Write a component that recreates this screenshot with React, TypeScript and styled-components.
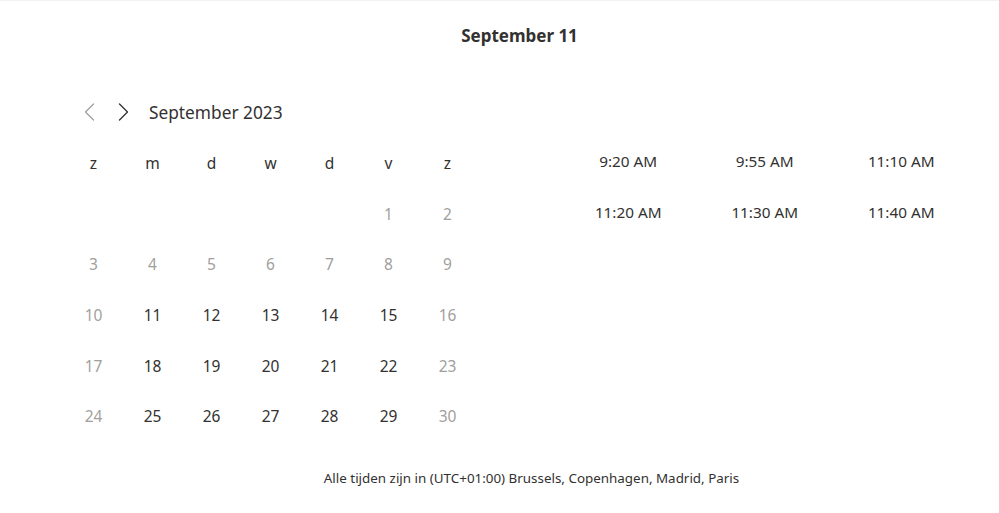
import React from 'react';
import styled, { createGlobalStyle } from 'styled-components';

const GlobalStyle = createGlobalStyle`
  html, body {
    margin: 0;
    padding: 0;
    background: #fff;
  }
  body {
    font-family: 'Noto Sans', 'Open Sans', sans-serif;
    color: #323130;
  }
`;

const Page = styled.div`
  width: 999px;
  height: 513px;
  box-sizing: border-box;
  border-top: 1px solid #f3f2f1;
  padding: 0 24px 0 64px;
  display: flex;
  flex-direction: column;
`;

const Title = styled.h2`
  margin: 0;
  height: 72px;
  line-height: 70px;
  text-align: center;
  font-size: 17px;
  font-weight: 700;
  color: #323130;
`;

const Body = styled.div`
  display: flex;
  align-items: flex-start;
  margin-top: 18px;
`;

const Calendar = styled.div`
  width: 414px;
  display: flex;
  flex-direction: column;
`;

const NavRow = styled.div`
  height: 47px;
  display: flex;
  align-items: center;
  padding-left: 16px;
  box-sizing: border-box;
  padding-bottom: 5px;
`;

const NavButton = styled.button<{ $muted?: boolean }>`
  border: 0;
  background: none;
  padding: 0;
  width: 34px;
  height: 28px;
  display: flex;
  align-items: center;
  justify-content: flex-start;
  padding-left: 4px;
  color: ${(p) => (p.$muted ? '#a19f9d' : '#323130')};
  cursor: pointer;
`;

const MonthLabel = styled.span`
  font-size: 17.3px;
  color: #323130;
  margin-left: 1px;
`;

const DayGrid = styled.div`
  display: grid;
  grid-template-columns: repeat(7, 59px);
  grid-auto-rows: 50.6px;
`;

const Cell = styled.div<{ $muted?: boolean }>`
  display: flex;
  align-items: center;
  justify-content: center;
  font-size: 15.5px;
  color: ${(p) => (p.$muted ? '#a19f9d' : '#323130')};
`;

const Times = styled.div`
  margin-left: 82px;
  padding-top: 44px;
  display: grid;
  grid-template-columns: repeat(3, 136.5px);
  grid-auto-rows: 51px;
`;

const Slot = styled.button`
  border: 0;
  background: none;
  font-family: inherit;
  font-size: 15.3px;
  color: #323130;
  display: flex;
  align-items: center;
  justify-content: center;
  cursor: pointer;
  padding: 0;
`;

const Footer = styled.div`
  margin-top: 26px;
  text-align: center;
  font-size: 13.4px;
  line-height: 20px;
  color: #323130;
  padding-left: 24px;
`;

const Chevron = ({ dir }: { dir: 'left' | 'right' }) => (
  <svg width="11" height="18" viewBox="0 0 11 18" fill="none">
    <path
      d={dir === 'left' ? 'M9.5 1 L1.5 9 L9.5 17' : 'M1.5 1 L9.5 9 L1.5 17'}
      stroke="currentColor"
      strokeWidth="1.3"
      strokeLinecap="round"
      strokeLinejoin="round"
    />
  </svg>
);

const weekdays = ['z', 'm', 'd', 'w', 'd', 'v', 'z'];
const slots = ['9:20 AM', '9:55 AM', '11:10 AM', '11:20 AM', '11:30 AM', '11:40 AM'];

const days: (number | null)[] = [null, null, null, null, null];
for (let i = 1; i <= 30; i++) days.push(i);

// muted: past days before the 11th, and weekends
const isMuted = (idx: number, day: number) => {
  const col = idx % 7;
  return day < 11 || col === 0 || col === 6;
};

export default function App() {
  return (
    <>
      <GlobalStyle />
      <Page>
        <Title>September 11</Title>
        <Body>
          <Calendar>
            <NavRow>
              <NavButton $muted aria-label="Vorige maand">
                <Chevron dir="left" />
              </NavButton>
              <NavButton aria-label="Volgende maand">
                <Chevron dir="right" />
              </NavButton>
              <MonthLabel>September 2023</MonthLabel>
            </NavRow>
            <DayGrid>
              {weekdays.map((d, i) => (
                <Cell key={'w' + i}>{d}</Cell>
              ))}
              {days.map((d, i) =>
                d === null ? (
                  <Cell key={'e' + i} />
                ) : (
                  <Cell key={d} $muted={isMuted(i, d)}>
                    {d}
                  </Cell>
                )
              )}
            </DayGrid>
          </Calendar>
          <Times>
            {slots.map((s) => (
              <Slot key={s}>{s}</Slot>
            ))}
          </Times>
        </Body>
        <Footer>Alle tijden zijn in (UTC+01:00) Brussels, Copenhagen, Madrid, Paris</Footer>
      </Page>
    </>
  );
}
